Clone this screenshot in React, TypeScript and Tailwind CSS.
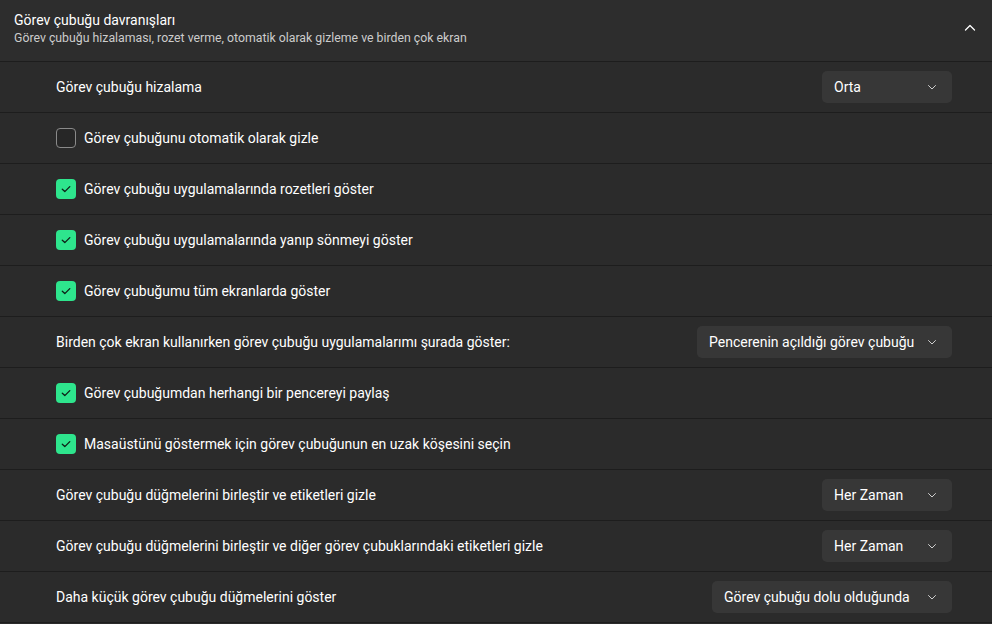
const rows: { kind: "select" | "check"; label: string; value?: string; checked?: boolean; w?: string }[] = [
  { kind: "select", label: "Görev çubuğu hizalama", value: "Orta", w: "w-[130px]" },
  { kind: "check", label: "Görev çubuğunu otomatik olarak gizle", checked: false },
  { kind: "check", label: "Görev çubuğu uygulamalarında rozetleri göster", checked: true },
  { kind: "check", label: "Görev çubuğu uygulamalarında yanıp sönmeyi göster", checked: true },
  { kind: "check", label: "Görev çubuğumu tüm ekranlarda göster", checked: true },
  {
    kind: "select",
    label: "Birden çok ekran kullanırken görev çubuğu uygulamalarımı şurada göster:",
    value: "Pencerenin açıldığı görev çubuğu",
    w: "w-[255px]",
  },
  { kind: "check", label: "Görev çubuğumdan herhangi bir pencereyi paylaş", checked: true },
  { kind: "check", label: "Masaüstünü göstermek için görev çubuğunun en uzak köşesini seçin", checked: true },
  { kind: "select", label: "Görev çubuğu düğmelerini birleştir ve etiketleri gizle", value: "Her Zaman", w: "w-[130px]" },
  {
    kind: "select",
    label: "Görev çubuğu düğmelerini birleştir ve diğer görev çubuklarındaki etiketleri gizle",
    value: "Her Zaman",
    w: "w-[130px]",
  },
  {
    kind: "select",
    label: "Daha küçük görev çubuğu düğmelerini göster",
    value: "Görev çubuğu dolu olduğunda",
    w: "w-[240px]",
  },
];

function Chevron({ up }: { up?: boolean }) {
  return (
    <svg width="12" height="12" viewBox="0 0 12 12" fill="none">
      <path
        d={up ? "M1.5 8 L6 3.5 L10.5 8" : "M2.5 4.5 L6 8 L9.5 4.5"}
        stroke="currentColor"
        strokeWidth={up ? 1.3 : 1}
        strokeLinecap="round"
        strokeLinejoin="round"
      />
    </svg>
  );
}

function Select({ value, w }: { value: string; w?: string }) {
  return (
    <div
      className={`flex h-[32px] items-center justify-between rounded-[5px] bg-[#373737] pl-[12px] pr-[14px] text-[14px] text-white ${w ?? ""}`}
    >
      <span>{value}</span>
      <span className="text-[#cfcfcf]">
        <Chevron />
      </span>
    </div>
  );
}

function Check({ checked }: { checked?: boolean }) {
  if (checked) {
    return (
      <div className="flex h-[20px] w-[20px] items-center justify-center rounded-[4px] bg-[#2ee58d]">
        <svg width="12" height="12" viewBox="0 0 12 12" fill="none">
          <path d="M2.3 6.3 L4.8 8.6 L9.8 3.6" stroke="#0d1f16" strokeWidth="1.3" strokeLinecap="round" strokeLinejoin="round" />
        </svg>
      </div>
    );
  }
  return <div className="h-[20px] w-[20px] rounded-[4px] border border-[#8a8a8a] bg-[#272727]" />;
}

export default function App() {
  return (
    <div className="h-[624px] w-[992px] overflow-hidden bg-[#2b2b2b] font-['Roboto',sans-serif] text-white">
      {/* Header */}
      <div className="flex h-[62px] items-center justify-between border-b border-[#1d1d1d] bg-[#2d2d2d] pb-[3px] pl-[14px] pr-[16px]">
        <div className="flex flex-col">
          <span className="text-[14px] leading-[19px]">Görev çubuğu davranışları</span>
          <span className="text-[12.3px] leading-[17px] text-[#cccccc]">
            Görev çubuğu hizalaması, rozet verme, otomatik olarak gizleme ve birden çok ekran
          </span>
        </div>
        <span className="mb-[3px] text-white">
          <Chevron up />
        </span>
      </div>

      {/* Rows */}
      {rows.map((r, i) => (
        <div
          key={i}
          className="flex h-[51px] items-center justify-between border-b border-[#1d1d1d] pl-[56px] pr-[40px] text-[14px]"
        >
          {r.kind === "check" ? (
            <div className="flex items-center gap-[8px]">
              <Check checked={r.checked} />
              <span>{r.label}</span>
            </div>
          ) : (
            <>
              <span>{r.label}</span>
              <Select value={r.value!} w={r.w} />
            </>
          )}
        </div>
      ))}
    </div>
  );
}
